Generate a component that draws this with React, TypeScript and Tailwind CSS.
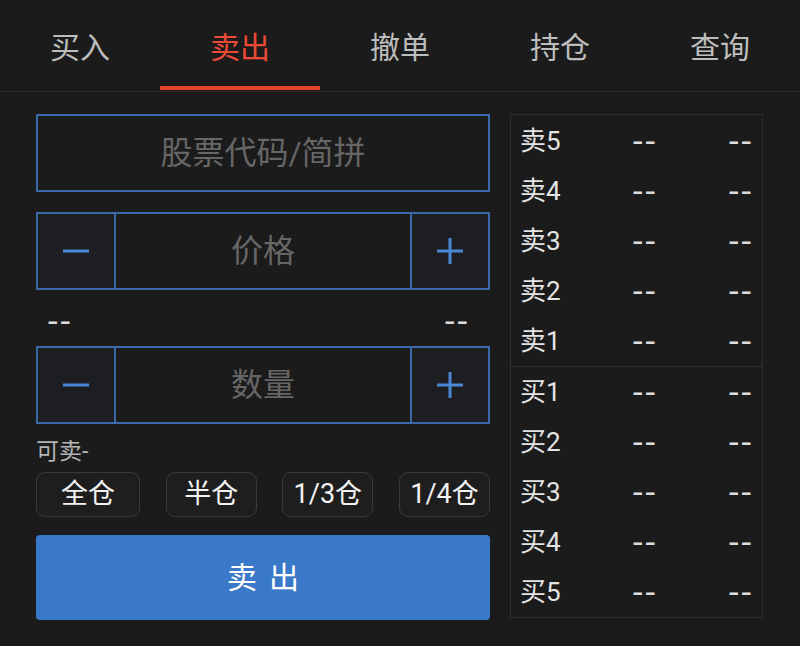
import React from 'react';

const tabs = ['买入', '卖出', '撤单', '持仓', '查询'];
const quick = [
  { label: '全仓', w: 'w-[104px]' },
  { label: '半仓', w: 'w-[91px]' },
  { label: '1/3仓', w: 'w-[91px]' },
  { label: '1/4仓', w: 'w-[91px]' },
];

const Minus = () => (
  <svg width="28" height="28" viewBox="0 0 28 28">
    <rect x="1" y="12.5" width="26" height="3" fill="#4a87d4" />
  </svg>
);

const Plus = () => (
  <svg width="28" height="28" viewBox="0 0 28 28">
    <rect x="1" y="12.5" width="26" height="3" fill="#4a87d4" />
    <rect x="12.5" y="1" width="3" height="26" fill="#4a87d4" />
  </svg>
);

const Stepper: React.FC<{ placeholder: string }> = ({ placeholder }) => (
  <div className="flex h-[78px] border-2 border-[#3a68a8]">
    <div className="w-[76px] flex items-center justify-center bg-[#1c1e22]">
      <Minus />
    </div>
    <div className="flex-1 flex items-center justify-center border-x-2 border-[#3a68a8] text-[32px] text-[#666666]">
      {placeholder}
    </div>
    <div className="w-[76px] flex items-center justify-center bg-[#1c1e22]">
      <Plus />
    </div>
  </div>
);

// wide, tight hyphens like the app's "--"
const Dash: React.FC<{ className?: string }> = ({ className = '' }) => (
  <span
    className={`block text-[32px] leading-none tracking-[1px] text-[#dcdcdc] ${className}`}
    style={{ fontFamily: '"DejaVu Sans", sans-serif' }}
  >
    --
  </span>
);

const BookRow: React.FC<{ label: string }> = ({ label }) => (
  <div className="h-[50px] flex items-center pl-[9px] text-[26px] text-[#e4e4e4]">
    <span className="w-[112px]">{label}</span>
    <Dash className="w-[96px]" />
    <Dash />
  </div>
);

export default function App() {
  return (
    <div
      className="w-[800px] h-[646px] bg-[#1b1b1b] overflow-hidden"
      style={{ fontFamily: 'Roboto, "Noto Sans CJK SC", sans-serif' }}
    >
      <div className="flex h-[92px] border-b border-[#2c2c2c]">
        {tabs.map((t, i) => (
          <div
            key={t}
            className={`relative flex-1 flex items-center justify-center pt-[4px] text-[30px] ${
              i === 1 ? 'text-[#ec4a36]' : 'text-[#bdbdbd]'
            }`}
          >
            {t}
            {i === 1 && <div className="absolute left-0 right-0 bottom-[1px] h-[4px] bg-[#e8412f]" />}
          </div>
        ))}
      </div>

      <div className="flex pl-[36px] pt-[22px] gap-[20px]">
        <div className="w-[454px] flex flex-col">
          <div className="h-[78px] border-2 border-[#3a68a8] flex items-center justify-center text-[32px] text-[#666666]">
            股票代码/简拼
          </div>
          <div className="mt-[20px]">
            <Stepper placeholder="价格" />
          </div>
          <div className="h-[56px] flex items-center justify-between pl-[11px] pr-[21px] pt-[6px]">
            <Dash />
            <Dash />
          </div>
          <Stepper placeholder="数量" />
          <div className="mt-[16px] text-[23px] leading-[24px] text-[#b5b5b5]">可卖-</div>
          <div className="mt-[8px] flex justify-between">
            {quick.map((q) => (
              <div
                key={q.label}
                className={`${q.w} h-[45px] flex items-center justify-center rounded-[9px] border border-[#3a3a3a] bg-[#1e1e1e] text-[27px] text-[#f2f2f2]`}
              >
                {q.label}
              </div>
            ))}
          </div>
          <div className="mt-[18px] h-[85px] rounded-[4px] bg-[#3a78c8] flex items-center justify-center text-[30px] text-white tracking-[12px] pl-[12px]">
            卖出
          </div>
        </div>

        <div className="w-[253px] h-[504px] border border-[#2e2e2e] flex flex-col">
          <div className="pt-[1px]">
            {[5, 4, 3, 2, 1].map((n) => (
              <BookRow key={n} label={`卖${n}`} />
            ))}
          </div>
          <div className="border-t border-[#2e2e2e]">
            {[1, 2, 3, 4, 5].map((n) => (
              <BookRow key={n} label={`买${n}`} />
            ))}
          </div>
        </div>
      </div>
    </div>
  );
}
